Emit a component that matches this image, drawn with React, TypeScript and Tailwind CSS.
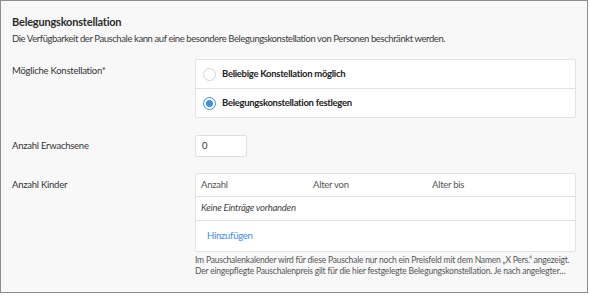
import React from 'react';

const Radio = ({ checked }: { checked?: boolean }) => (
    <span
        className={`flex h-[13px] w-[13px] shrink-0 items-center justify-center rounded-full border bg-white ${
            checked ? 'border-[#3d8fe0]' : 'border-[#d2d2d2]'
        }`}
    >
        {checked && <span className="h-[7px] w-[7px] rounded-full bg-[#3d8fe0]" />}
    </span>
);

export default function App() {
    return (
        <div className="h-[295px] w-[590px] bg-white font-['Lato',sans-serif] text-[9.5px] tracking-[-0.25px] text-[#333]">
            <div className="h-[293px] w-[588px] border border-[#8d8d8d] bg-[#f8f8f8] px-[11px] pt-[13px]">
                <h2 className="text-[11px] font-bold leading-[16px] tracking-[-0.2px] text-[#2b2b2b]">Belegungskonstellation</h2>
                <p className="mt-[2px] leading-[14px] tracking-[-0.42px] text-[#3a3a3a]">
                    Die Verfügbarkeit der Pauschale kann auf eine besondere Belegungskonstellation von Personen beschränkt werden.
                </p>

                {/* Mögliche Konstellation */}
                <div className="mt-[13px] flex">
                    <div className="w-[183px] shrink-0 pt-[5px] leading-[14px]">Mögliche Konstellation*</div>
                    <div className="w-[383px] rounded-[2px] border border-[#e3e3e3] bg-white">
                        <label className="flex h-[29px] items-center gap-[6px] border-b border-[#e3e3e3] px-[7px] font-bold tracking-[-0.3px] text-[#222]">
                            <Radio />
                            Beliebige Konstellation möglich
                        </label>
                        <label className="flex h-[28px] items-center gap-[6px] px-[7px] font-bold tracking-[-0.3px] text-[#222]">
                            <Radio checked />
                            Belegungskonstellation festlegen
                        </label>
                    </div>
                </div>

                {/* Anzahl Erwachsene */}
                <div className="mt-[17px] flex items-center">
                    <div className="w-[183px] shrink-0 leading-[14px]">Anzahl Erwachsene</div>
                    <div className="flex h-[22px] w-[52px] items-center rounded-[2px] border border-[#e0e0e0] bg-white px-[6px]">
                        0
                    </div>
                </div>

                {/* Anzahl Kinder */}
                <div className="mt-[16px] flex">
                    <div className="w-[183px] shrink-0 pt-[5px] leading-[14px]">Anzahl Kinder</div>
                    <div className="w-[383px]">
                        <div className="rounded-[2px] border border-[#e3e3e3] bg-white">
                            <div className="flex h-[23px] items-center border-b border-[#e3e3e3] px-[5px] text-[#555]">
                                <span className="w-[112px]">Anzahl</span>
                                <span className="w-[119px]">Alter von</span>
                                <span>Alter bis</span>
                            </div>
                            <div className="flex h-[24px] items-center border-b border-[#e3e3e3] px-[5px] italic text-[#444]">
                                Keine Einträge vorhanden
                            </div>
                            <div className="flex h-[30px] items-center px-[11px] text-[#3b8ee0]">Hinzufügen</div>
                        </div>
                        <div className="mt-[3px] text-[8.5px] leading-[11px] tracking-[-0.2px] text-[#555]">
                            <p className="whitespace-nowrap">
                                Im Pauschalenkalender wird für diese Pauschale nur noch ein Preisfeld mit dem Namen „X Pers.“ angezeigt.
                            </p>
                            <p className="whitespace-nowrap">
                                Der eingepflegte Pauschalenpreis gilt für die hier festgelegte Belegungskonstellation. Je nach angelegter…
                            </p>
                        </div>
                    </div>
                </div>
            </div>
        </div>
    );
}
